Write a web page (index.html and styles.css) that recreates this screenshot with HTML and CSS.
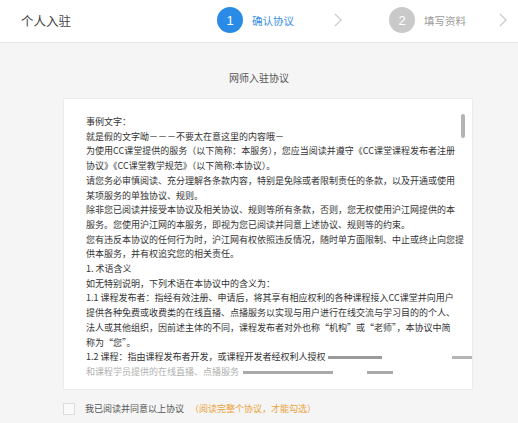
FILE: index.html
```html
<!DOCTYPE html>
<html lang="zh-CN">
<head>
<meta charset="utf-8">
<title>个人入驻</title>
<link rel="stylesheet" href="styles.css">
</head>
<body>
<header class="topbar">
  <div class="page-title">个人入驻</div>
  <div class="steps">
    <div class="step active">
      <span class="step-num">1</span>
      <span class="step-label">确认协议</span>
    </div>
    <svg class="chev" viewBox="0 0 8 14" width="8" height="14"><polyline points="1,1 7,7 1,13" fill="none" stroke="#c9c9c9" stroke-width="1.2"/></svg>
    <div class="step">
      <span class="step-num">2</span>
      <span class="step-label">填写资料</span>
    </div>
    <svg class="chev chev-last" viewBox="0 0 8 14" width="8" height="14"><polyline points="1,1 7,7 1,13" fill="none" stroke="#c9c9c9" stroke-width="1.2"/></svg>
  </div>
</header>
<main class="content">
  <h1 class="agree-title">网师入驻协议</h1>
  <div class="agree-box">
    <div class="agree-text">
      事例文字：<br>
      就是假的文字呦－－－不要太在意这里的内容哦－<br>
      为使用CC课堂提供的服务（以下简称：本服务），您应当阅读并遵守《CC课堂课程发布者注册<br>
      协议》《CC课堂教学规范》（以下简称:本协议）。<br>
      请您务必审慎阅读、充分理解各条款内容，特别是免除或者限制责任的条款，以及开通或使用<br>
      某项服务的单独协议、规则。<br>
      除非您已阅读并接受本协议及相关协议、规则等所有条款，否则，您无权使用沪江网提供的本<br>
      服务。您使用沪江网的本服务，即视为您已阅读并同意上述协议、规则等的约束。<br>
      您有违反本协议的任何行为时，沪江网有权依照违反情况，随时单方面限制、中止或终止向您提<br>
      供本服务，并有权追究您的相关责任。<br>
      1. 术语含义<br>
      如无特别说明，下列术语在本协议中的含义为：<br>
      1.1 课程发布者：指经有效注册、申请后，将其享有相应权利的各种课程接入CC课堂并向用户<br>
      提供各种免费或收费类的在线直播、点播服务以实现与用户进行在线交流与学习目的的个人、<br>
      法人或其他组织，因前述主体的不同，课程发布者对外也称“机构”或“老师”，本协议中简<br>
      称为“您”。<br>
      1.2 课程：指由课程发布者开发，或课程开发者经权利人授权<span class="smear s1"></span><span class="smear s2"></span><br>
      <span class="faint">和课程学员提供的在线直播、点播服务</span><span class="smear s3"></span><span class="smear s4"></span>
    </div>
    <div class="scroll-thumb"></div>
  </div>
  <label class="agree-row">
    <span class="checkbox"></span>
    <span class="agree-label">我已阅读并同意以上协议</span>
    <span class="agree-hint">（阅读完整个协议，才能勾选）</span>
  </label>
</main>
</body>
</html>
```

FILE: styles.css
```css
* { box-sizing: border-box; }
html, body { margin: 0; padding: 0; }
body {
  width: 518px;
  height: 423px;
  overflow: hidden;
  background: #f5f5f5;
  font-family: "Noto Sans CJK SC", "Noto Sans", sans-serif;
  color: #333;
}
.topbar {
  height: 43px;
  background: #fff;
  border-bottom: 1px solid #e6e6e6;
  display: flex;
  align-items: center;
  padding-left: 21px;
  padding-bottom: 2px;
}
.page-title {
  font-size: 12.5px;
  color: #444;
  width: 196px;
}
.steps {
  display: flex;
  align-items: center;
}
.step {
  display: flex;
  align-items: center;
}
.step-num {
  width: 26px;
  height: 26px;
  border-radius: 50%;
  background: #c9c9c9;
  color: #fff;
  font-family: "Liberation Sans", sans-serif;
  font-size: 13px;
  display: flex;
  align-items: center;
  justify-content: center;
}
.step-label {
  margin-left: 9px;
  font-size: 10.5px;
  color: #9a9a9a;
}
.step.active .step-num { background: #2a8be6; }
.step.active .step-label { color: #3b8fe3; }
.chev { margin: 0 47px 0 40px; }
.chev-last { margin: 0 0 0 33px; }
.content {
  padding-top: 28px;
}
.agree-title {
  margin: 0;
  text-align: center;
  font-size: 10px;
  font-weight: normal;
  line-height: 14px;
  color: #555;
  height: 27px;
}
.agree-box {
  position: relative;
  margin-left: 63px;
  width: 410px;
  height: 292px;
  background: #fff;
  border: 1px solid #ececec;
  overflow: hidden;
  padding: 16px 0 0 22px;
}
.agree-text {
  font-size: 9px;
  line-height: 14.7px;
  white-space: nowrap;
  color: #333;
}
.smear {
  display: inline-block;
  height: 3px;
  background: #9a9a9a;
  vertical-align: middle;
}
.s1 { width: 54px; margin-left: 2px; }
.s2 { width: 26px; margin-left: 70px; background: #b5b5b5; }
.s3 { width: 90px; margin-left: 4px; background: #aaa; }
.s4 { width: 26px; margin-left: 34px; background: #aaa; }
.faint { color: #b0b0b0; }
.scroll-thumb {
  position: absolute;
  top: 15px;
  right: 7px;
  width: 4px;
  height: 24px;
  border-radius: 2px;
  background: #b4b4b4;
}
.agree-row {
  display: flex;
  align-items: center;
  margin: 12px 0 0 63px;
  font-size: 9px;
}
.checkbox {
  width: 12px;
  height: 12px;
  border: 1px solid #dcdcdc;
  background: #fafafa;
}
.agree-label {
  margin-left: 10px;
  color: #555;
}
.agree-hint {
  margin-left: 6px;
  color: #eaa23a;
}
```
